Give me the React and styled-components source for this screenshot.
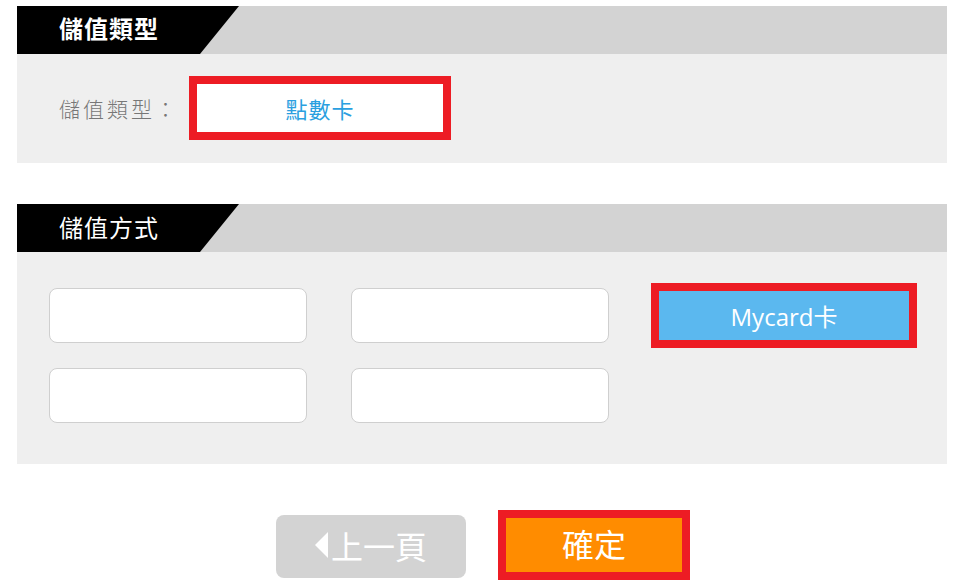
import React from "react";
import styled, { createGlobalStyle } from "styled-components";

const Global = createGlobalStyle`
  html, body { margin: 0; padding: 0; background: #fff; }
  body { font-family: "Noto Sans CJK TC", "Noto Sans", sans-serif; }
`;

const Page = styled.div`
  padding: 6px 8px 0 17px;
  width: 930px;
`;

const Section = styled.section`
  margin-bottom: ${(p) => p.$gap || 0}px;
`;

const Header = styled.div`
  height: 48px;
  background: #d3d3d3;
  display: flex;
`;

const HeaderTab = styled.div`
  width: 222px;
  height: 48px;
  background: #000;
  clip-path: polygon(0 0, 100% 0, calc(100% - 39px) 100%, 0 100%);
  color: #fff;
  font-size: 24px;
  font-weight: ${(p) => (p.$bold ? 700 : 400)};
  letter-spacing: 1px;
  line-height: ${(p) => (p.$bold ? 43 : 46)}px;
  padding-left: 42px;
  box-sizing: border-box;
`;

const Body = styled.div`
  background: #efefef;
  padding: ${(p) => p.$pad};
`;

const TypeRow = styled.div`
  display: flex;
  align-items: center;
`;

const Label = styled.div`
  width: 130px;
  padding-left: 42px;
  color: #777;
  font-size: 21px;
  letter-spacing: 3px;
  font-weight: 300;
`;

const RedBox = styled.div`
  box-sizing: border-box;
  border: 8px solid #ed1c24;
  width: ${(p) => p.$w}px;
  height: ${(p) => p.$h}px;
  background: ${(p) => p.$bg};
  color: ${(p) => p.$fg};
  font-size: ${(p) => p.$fs}px;
  display: flex;
  align-items: center;
  justify-content: center;
  padding-bottom: ${(p) => p.$lift || 0}px;
  letter-spacing: ${(p) => p.$ls || 0}px;
`;

const Grid = styled.div`
  display: grid;
  grid-template-columns: 258px 258px 266px;
  grid-auto-rows: 55px;
  column-gap: 44px;
  row-gap: 25px;
  align-items: center;
  & > :nth-child(3) {
    margin: -5px 0 -5px -2px;
  }
`;

const Option = styled.div`
  box-sizing: border-box;
  height: 55px;
  background: #fff;
  border: 1px solid #cfcfcf;
  border-radius: 8px;
`;

const MycardText = styled.span`
  font-family: "Open Sans", "Noto Sans CJK TC", sans-serif;
  font-weight: 400;
`;

const ButtonRow = styled.div`
  display: flex;
  justify-content: center;
  align-items: center;
  gap: 32px;
  margin-top: 46px;
  margin-left: 2px;
`;

const BackButton = styled.div`
  box-sizing: border-box;
  width: 190px;
  height: 63px;
  background: #d3d3d3;
  border-radius: 8px;
  color: #fff;
  font-size: 32px;
  display: flex;
  align-items: center;
  justify-content: center;
  padding-bottom: 3px;
  margin-top: 2px;
`;

const Arrow = styled.span`
  display: inline-block;
  width: 0;
  height: 0;
  border-top: 13px solid transparent;
  border-bottom: 13px solid transparent;
  border-right: 13px solid #fff;
  margin-right: 3px;
`;

export default function App() {
  return (
    <>
      <Global />
      <Page>
        <Section $gap={41}>
          <Header>
            <HeaderTab $bold>儲值類型</HeaderTab>
          </Header>
          <Body $pad="22px 0 23px 0">
            <TypeRow>
              <Label>儲值類型：</Label>
              <RedBox $w={262} $h={64} $bg="#fff" $fg="#2a9fe0" $fs={22} $ls={1}>
                點數卡
              </RedBox>
            </TypeRow>
          </Body>
        </Section>
        <Section>
          <Header>
            <HeaderTab>儲值方式</HeaderTab>
          </Header>
          <Body $pad="36px 0 41px 32px">
            <Grid>
              <Option />
              <Option />
              <RedBox $w={266} $h={65} $bg="#5bb8ef" $fg="#fff" $fs={24}>
                <MycardText>Mycard卡</MycardText>
              </RedBox>
              <Option />
              <Option />
            </Grid>
          </Body>
        </Section>
        <ButtonRow>
          <BackButton>
            <Arrow />
            上一頁
          </BackButton>
          <RedBox $w={192} $h={70} $bg="#ff8c00" $fg="#fff" $fs={32} $lift={4}>
            確定
          </RedBox>
        </ButtonRow>
      </Page>
    </>
  );
}
